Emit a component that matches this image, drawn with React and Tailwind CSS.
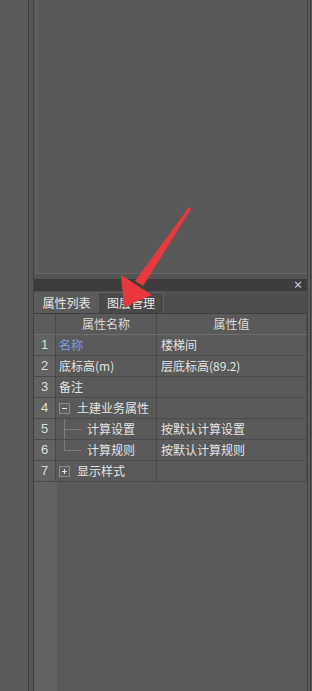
import React from "react";

const rows = [
  { n: 1, name: "名称", value: "楼梯间", blue: true },
  { n: 2, name: "底标高(m)", value: "层底标高(89.2)" },
  { n: 3, name: "备注", value: "" },
  { n: 4, name: "土建业务属性", value: "", box: "minus" },
  { n: 5, name: "计算设置", value: "按默认计算设置", child: "mid" },
  { n: 6, name: "计算规则", value: "按默认计算规则", child: "last" },
  { n: 7, name: "显示样式", value: "", box: "plus" },
];

function Box({ kind }) {
  return (
    <span className="relative inline-flex w-[11px] h-[11px] border border-[#8a8a8a] bg-[#5e5e5e] items-center justify-center">
      <span className="absolute w-[5px] h-px bg-[#e0e0e0]" />
      {kind === "plus" && <span className="absolute w-px h-[5px] bg-[#e0e0e0]" />}
    </span>
  );
}

export default function App() {
  return (
    <div
      className="relative w-[312px] h-[691px] flex bg-[#5a5a5a] overflow-hidden"
      style={{ fontFamily: '"Noto Sans CJK SC", "Noto Sans", sans-serif' }}
    >
      <div className="w-[28px] bg-[#5a5a5a]" />
      <div className="w-px bg-[#3f3f3f]" />
      <div className="w-[4px] bg-[#565656]" />
      <div className="w-px bg-[#444444]" />
      <div className="flex-1 flex flex-col">
        <div className="h-[273px] flex bg-[#595959]">
          <div className="w-px bg-[#575757]" />
          <div className="w-[3px] bg-[#5d5d5d]" />
          <div className="flex-1" />
        </div>
        <div className="h-px bg-[#666666]" />
        <div className="h-[5px] bg-[#555555]" />
        <div className="h-[12px] bg-[#3d3d3d] flex items-center justify-end pr-[4px]">
          <span className="text-[10px] leading-none text-[#cfcfcf] font-bold">×</span>
        </div>
        <div className="h-[22px] bg-[#4e4e4e] flex items-end">
          <div className="w-[65px] h-[21px] bg-[#5b5b5b] flex items-center justify-center text-[12px] text-[#e6e6e6]">
            属性列表
          </div>
          <div className="w-[65px] h-[21px] bg-[#4a4a4a] border-t border-r border-[#606060] flex items-center justify-center text-[12px] text-[#e6e6e6]">
            图层管理
          </div>
        </div>
        <div className="h-px bg-[#3e3e3e]" />
        <div className="flex-1 flex flex-col text-[12px] text-[#e2e2e2]">
          <div className="flex h-[21px] border-b border-[#6c6c6c]">
            <div className="w-[22px] bg-[#5c5c5c] border-r border-[#4a4a4a]" />
            <div className="w-[101px] flex items-center justify-center border-r border-[#4a4a4a] text-[#d8d8d8]">
              属性名称
            </div>
            <div className="w-[150px] flex items-center justify-center border-r border-[#4a4a4a] text-[#d8d8d8]">
              属性值
            </div>
          </div>
          {rows.map((r) => (
            <div key={r.n} className="flex h-[21px] border-b border-[#4b4b4b]">
              <div className="w-[22px] bg-[#626262] border-r border-[#4a4a4a] flex items-center justify-center text-[13px] text-[#dcdcdc]" style={{ fontFamily: '"Liberation Sans", sans-serif' }}>
                {r.n}
              </div>
              <div className="relative w-[101px] flex items-center pl-[3px] border-r border-[#4a4a4a]">
                {r.box && (
                  <span className="mr-[7px] flex items-center">
                    <Box kind={r.box} />
                  </span>
                )}
                {r.child && (
                  <>
                    <span
                      className={
                        r.child === "mid"
                          ? "absolute left-[8px] top-0 bottom-0 w-px bg-[#7a7a7a]"
                          : "absolute left-[8px] top-0 h-[11px] w-px bg-[#7a7a7a]"
                      }
                    />
                    <span className="absolute left-[8px] top-[10px] w-[17px] h-px bg-[#7a7a7a]" />
                    <span className="w-[28px]" />
                  </>
                )}
                <span className={r.blue ? "text-[#7d9de0]" : ""}>{r.name}</span>
              </div>
              <div className="w-[150px] flex items-center pl-[4px] border-r border-[#4a4a4a]">
                {r.value}
              </div>
            </div>
          ))}
          <div className="flex-1 flex">
            <div className="w-[23px] bg-[#626262]" />
          </div>
        </div>
      </div>
      <div className="w-px bg-[#454545]" />
      <div className="w-[2px] bg-[#5c5c5c]" />
      <div className="w-px bg-[#3f3f3f]" />
      <div className="w-px bg-[#5a5a5a]" />

      <svg className="absolute left-0 top-0 pointer-events-none" width="312" height="691">
        <path d="M189 207 L191 209 L143 286 L135 281 Z" fill="#e8383d" />
        <path d="M124 307 L121 275 L152 295 Z" fill="#e8383d" />
      </svg>
    </div>
  );
}
